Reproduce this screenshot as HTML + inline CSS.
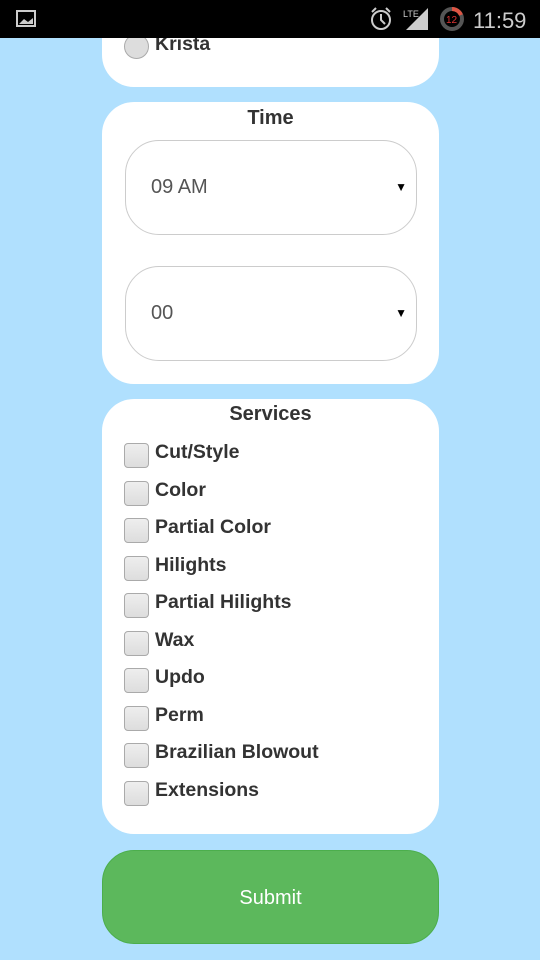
<!DOCTYPE html><html><head><style>
body{margin:0;width:540px;height:960px;background:#b0e0fe;position:relative;overflow:hidden;font-family:"Liberation Sans",sans-serif}
.sb{position:absolute;left:0;top:0;width:540px;height:38px;background:#000;z-index:5}
.card{position:absolute;left:102px;width:337px;background:#fff;border-radius:32px}
.h{position:absolute;width:100%;text-align:center;font-weight:bold;font-size:20px;color:#333}
.sel{position:absolute;left:23px;width:292px;height:95px;border:1px solid #ccc;border-radius:34px;box-sizing:border-box;color:#555;font-size:20px;line-height:93px;padding-left:25px}
.sel:after{content:"▼";position:absolute;right:9px;top:0;font-size:12px;color:#000}
.cb{position:absolute;left:22px;width:25px;height:25px;border:1px solid #aaa;border-radius:4px;background:linear-gradient(#eee,#ddd);box-sizing:border-box}
.lb{position:absolute;left:53px;font-weight:bold;font-size:19.5px;color:#333}
</style></head><body>
<div class="sb">
<svg width="540" height="38" style="position:absolute;left:0;top:0">
<rect x="17" y="11" width="18" height="15" fill="none" stroke="#ccc" stroke-width="2"/><path d="M19 24 L24 19 L28 22 L33 18 L33 24Z" fill="#ccc"/>
<circle cx="381" cy="20" r="9" fill="none" stroke="#ccc" stroke-width="2"/><path d="M381 14v6l4 4" stroke="#ccc" stroke-width="2" fill="none"/>
<path d="M372 12 l4 -4 M390 12 l-4 -4" stroke="#ccc" stroke-width="2"/>
<text x="403" y="17" fill="#ccc" font-size="9" font-family="Liberation Sans">LTE</text><path d="M406 30 L428 8 L428 30Z" fill="#ccc"/>
<circle cx="452" cy="19" r="10" fill="none" stroke="#555" stroke-width="4"/><path d="M452 9 A10 10 0 0 1 461 15" stroke="#d54" stroke-width="4" fill="none"/>
<text x="446" y="23" fill="#d33" font-size="10" font-family="Liberation Sans">12</text>
<text x="473" y="28" fill="#ccc" font-size="22" font-family="Liberation Sans">11:59</text>
</svg></div>
<div class="card" style="top:0;height:87px;border-radius:0 0 32px 32px">
<div style="position:absolute;left:22px;top:34px;width:25px;height:25px;border-radius:50%;border:1px solid #aaa;background:#ddd;box-sizing:border-box"></div>
<div class="lb" style="top:33px">Krista</div></div>
<div class="card" style="top:102px;height:282px">
<div class="h" style="top:5px">Time</div>
<div class="sel" style="top:38px">09 AM</div>
<div class="sel" style="top:164px">00</div></div>
<div class="card" style="top:399px;height:435px">
<div class="h" style="top:4px">Services</div>
<div class="cb" style="top:44px"></div><div class="lb" style="top:42px">Cut/Style</div>
<div class="cb" style="top:82px"></div><div class="lb" style="top:80px">Color</div>
<div class="cb" style="top:119px"></div><div class="lb" style="top:117px">Partial Color</div>
<div class="cb" style="top:157px"></div><div class="lb" style="top:155px">Hilights</div>
<div class="cb" style="top:194px"></div><div class="lb" style="top:192px">Partial Hilights</div>
<div class="cb" style="top:232px"></div><div class="lb" style="top:230px">Wax</div>
<div class="cb" style="top:269px"></div><div class="lb" style="top:267px">Updo</div>
<div class="cb" style="top:307px"></div><div class="lb" style="top:305px">Perm</div>
<div class="cb" style="top:344px"></div><div class="lb" style="top:342px">Brazilian Blowout</div>
<div class="cb" style="top:382px"></div><div class="lb" style="top:380px">Extensions</div>
</div>
<div style="position:absolute;left:102px;top:850px;width:337px;height:94px;background:#5cb85c;border:1px solid #4cae4c;box-sizing:border-box;border-radius:32px;color:#fff;font-size:20px;text-align:center;line-height:94px">Submit</div>
</body></html>
